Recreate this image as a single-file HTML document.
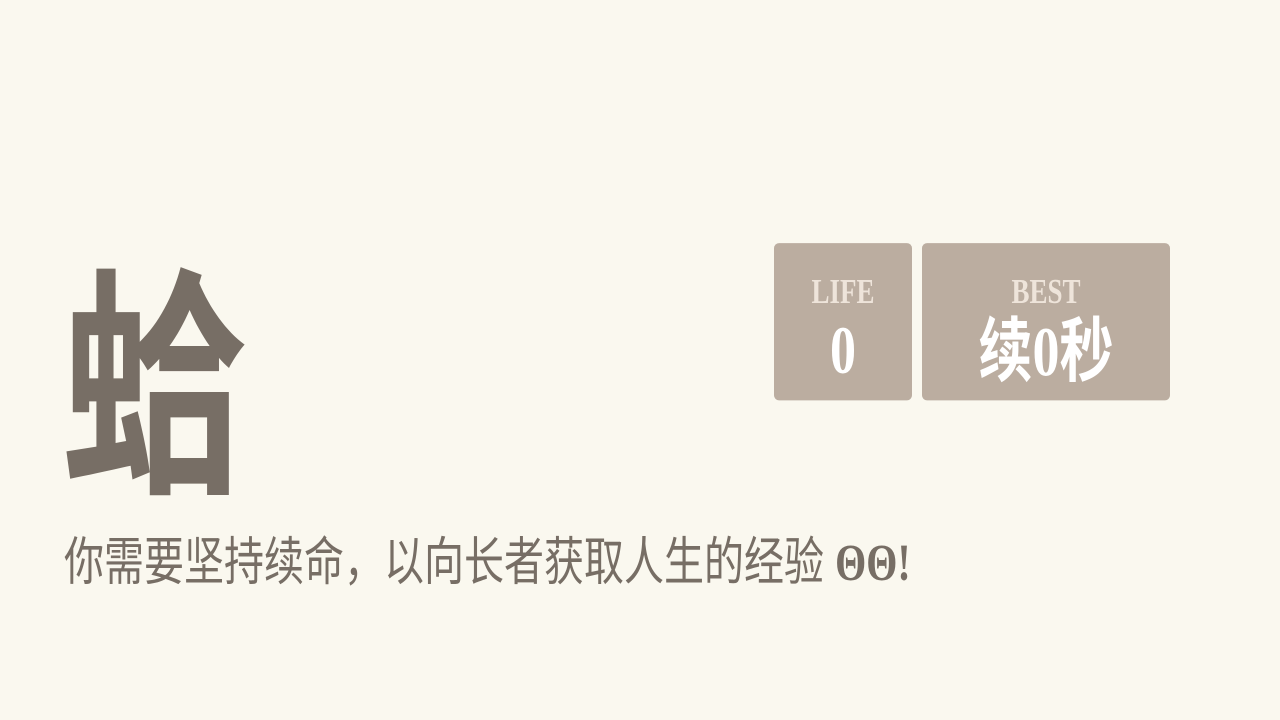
<!DOCTYPE html>
<html><head><meta charset="utf-8"><style>
html,body{margin:0;padding:0;width:1280px;height:720px;overflow:hidden;background:#faf8ef;}
#w{position:absolute;left:0;top:0;width:1280px;height:554px;transform:scaleY(1.3);transform-origin:0 0;}
.a{position:absolute;white-space:nowrap;}
.big{left:62px;top:190px;font:bold 186px/1 "Noto Sans CJK SC",sans-serif;color:#776e65;}
.sub{left:64px;top:409px;font:40px/1.2 "Liberation Sans","Noto Sans CJK SC",sans-serif;color:#776e65;}
.sub b{font-family:"Liberation Serif",serif;}
.box{position:absolute;top:187px;height:121px;background:#bbada0;border-radius:5px/4px;text-align:center;}
.lab{position:absolute;left:0;right:0;top:24px;font:bold 27px/1 "Liberation Serif",serif;color:#eee4da;}
.val{position:absolute;left:0;right:0;top:58px;font:bold 52px/1 "Liberation Serif","Noto Sans CJK SC",serif;color:#fff;}
</style></head><body><div id="w">
<div class="a big">蛤</div>
<div class="a sub">你需要坚持续命，以向长者获取人生的经验 <b>ΘΘ!</b></div>
<div class="box" style="left:774px;width:138px"><div class="lab">LIFE</div><div class="val">0</div></div>
<div class="box" style="left:922px;width:248px"><div class="lab">BEST</div><div class="val" style="font-size:54px;top:57px">续0秒</div></div>
</div></body></html>
